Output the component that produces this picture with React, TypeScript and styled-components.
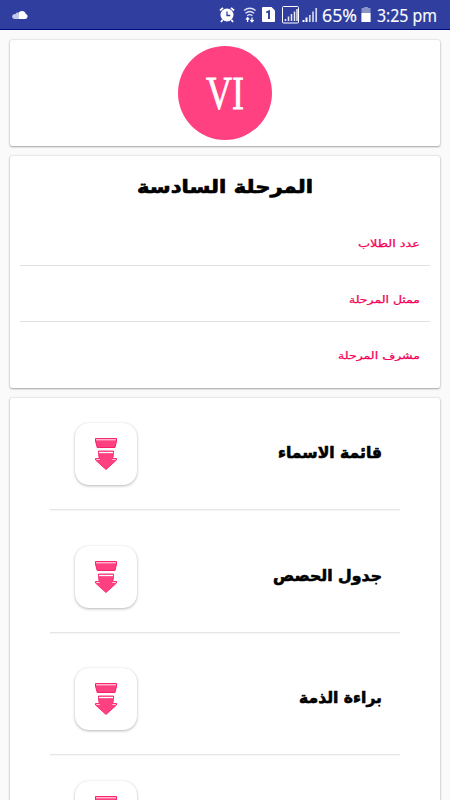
import React from 'react';
import styled, { createGlobalStyle } from 'styled-components';

const GlobalStyle = createGlobalStyle`
  * { box-sizing: border-box; }
  html, body { margin: 0; height: 800px; overflow: hidden; background: #fafafa; }
`;

const Screen = styled.div`
  width: 450px;
  height: 800px;
  overflow: hidden;
  background: #fafafa;
  display: flex;
  flex-direction: column;
`;

const StatusBar = styled.header`
  flex: none;
  height: 30px;
  background: #303f9f;
  border-bottom: 1px solid #000a80;
  display: flex;
  align-items: center;
  justify-content: space-between;
  padding: 0 13px 0 12px;
`;

const StatusGroup = styled.div`
  display: flex;
  align-items: center;
  height: 29px;
`;

const StatusText = styled.svg`
  display: block;
  overflow: visible;
  fill: #fff;
  font-family: 'Open Sans', 'Noto Sans', sans-serif;
  font-size: 18px;
  text { stroke: #fff; stroke-width: 0.2px; }
`;

const Content = styled.main`
  flex: none;
  display: flex;
  flex-direction: column;
  gap: 10px;
  padding: 10px 10px 0;
`;

const Card = styled.section<{ $height: number }>`
  height: ${(p) => p.$height}px;
  background: #fff;
  border-radius: 2px;
  box-shadow: 0 1px 2px rgba(0, 0, 0, 0.3), 0 0 2px rgba(0, 0, 0, 0.22);
`;

const BadgeCard = styled(Card)`
  display: flex;
  justify-content: center;
  padding-top: 6px;
`;

const Badge = styled.div`
  width: 94px;
  height: 94px;
  border-radius: 50%;
  background: #ff4081;
  display: flex;
  align-items: center;
  justify-content: center;
`;

const Numeral = styled.svg`
  display: block;
  overflow: visible;
  fill: #fff;
  stroke: #fff;
  stroke-width: 0.8px;
  font-family: 'Liberation Serif', serif;
  font-size: 46px;
`;

const InfoCard = styled(Card)`
  padding: 0 10px;
`;

const Title = styled.h1`
  margin: 0;
  height: 53px;
  display: flex;
  justify-content: center;
`;

const InfoRow = styled.div`
  height: 56px;
  padding-right: 10px;
  display: flex;
  justify-content: flex-end;
  & + & { border-top: 1px solid #e1e1e1; }
`;

const ListCard = styled(Card)`
  padding: 0 40px;
`;

const ListRow = styled.div<{ $height: number; $top: number }>`
  height: ${(p) => p.$height}px;
  padding: ${(p) => p.$top}px 18px 0 25px;
  display: flex;
  align-items: flex-start;
  justify-content: space-between;
  border-bottom: 1px solid #e6e6e6;
  box-shadow: 0 1px 0 #f6f6f6;
`;

const DownloadButton = styled.button`
  width: 62px;
  height: 62px;
  padding: 0;
  border: 0;
  border-radius: 14px;
  background: #fff;
  box-shadow: 0 1px 3px rgba(0, 0, 0, 0.28), 0 0 1px rgba(0, 0, 0, 0.08);
  display: flex;
  align-items: center;
  justify-content: center;
  flex: none;
`;

const Label = styled.svg<{ $color: string; $size: number; $weight: number; $stroke: number }>`
  display: block;
  overflow: visible;
  flex: none;
  fill: ${(p) => p.$color};
  stroke: ${(p) => p.$color};
  stroke-width: ${(p) => p.$stroke}px;
  stroke-linejoin: round;
  font-family: 'DejaVu Sans', sans-serif;
  font-size: ${(p) => p.$size}px;
  font-weight: ${(p) => p.$weight};
`;

type ArabicProps = {
  text: string;
  width: number;
  baseline: number;
  size: number;
  color?: string;
  weight?: number;
  stroke?: number;
};

function Arabic({ text, width, baseline, size, color = '#000', weight = 700, stroke = 0.6 }: ArabicProps) {
  return (
    <Label $color={color} $size={size} $weight={weight} $stroke={stroke} width={width} height={baseline + 8}>
      <text x={width} y={baseline} direction="rtl" textLength={width} lengthAdjust="spacingAndGlyphs">
        {text}
      </text>
    </Label>
  );
}

function DownloadIcon() {
  return (
    <svg width="24" height="34" viewBox="0 0 24 34">
      <path d="M1.500 1.500h21v2.500l-1.500 6.500H3.200L1.500 4z" fill="#ff4081" stroke="#f8206b" />
      <path d="M2 2.700h20" stroke="#ffb3cb" strokeWidth="1.500" />
      <path d="M4.500 14h15v2.500L18.800 21.500H22.500v1.500L12 32.500 1.500 23v-1.500H5.200L4.500 16.500z" fill="#ff4081" stroke="#f8206b" strokeWidth=".9" />
      <path d="M5 15.500h14" stroke="#fff" strokeWidth="1.300" />
      <path d="M2.200 22.500h3.600M21.800 22.500h-3.600" stroke="#ffc4d7" strokeWidth="1.200" />
    </svg>
  );
}

function StatusIcons() {
  return (
    <svg width="101" height="29" viewBox="219 0 101 29" fill="none">
      <circle cx="227" cy="15" r="6.500" fill="#fff" />
      <path d="M220 10.500l3-2.700M234 10.500l-3-2.700M222.500 20l-1.500 2M231.500 20l1.500 2" stroke="#fff" strokeWidth="1.800" />
      <path d="M227 11.500V15.500h3.300" stroke="#303f9f" strokeWidth="1.300" />
      <path d="M244 10.500q5.800-4.500 11.600 0M245.500 13.200q4.300-3.400 8.600 0M247.200 15.700q2.600-2 5.200 0" stroke="#dfe2f3" strokeWidth="1.300" />
      <path d="M247.600 22v-4M246 19.500l1.600-1.800 1.600 1.800M252 17.500v4M250.400 20l1.600 1.800 1.600-1.800" stroke="#fff" strokeWidth="1.200" />
      <path d="M263 7h8.500l3.500 3.500V21q0 1-1 1H263q-1 0-1-1V8q0-1 1-1z" fill="#fff" />
      <path d="M266.300 12.500l2.700-1.300V19" stroke="#303f9f" strokeWidth="1.900" />
      <rect x="282.500" y="6.500" width="16" height="16.500" rx="1" stroke="#fff" />
      <path d="M285.500 21v-2M288.500 21v-4.500M291.500 21v-7M294.500 21V11.500M297 21V9" stroke="#e8eaf6" strokeWidth="1.500" />
      <path d="M303.500 22v-2M306.500 22v-4.500" stroke="#fff" strokeWidth="2" />
      <path d="M309.800 22v-7M313 22V11.500M316.200 22V8" stroke="#d0d4ec" strokeWidth="1.700" />
    </svg>
  );
}

const details = [
  { text: 'عدد الطلاب', width: 62, baseline: 38 },
  { text: 'ممثل المرحلة', width: 71, baseline: 37 },
  { text: 'مشرف المرحلة', width: 82, baseline: 37 },
];

const downloads = [
  { text: 'قائمة الاسماء', width: 104, height: 112, top: 25 },
  { text: 'جدول الحصص', width: 109, height: 123, top: 36 },
  { text: 'براءة الذمة', width: 83, height: 122, top: 35 },
  { text: '', width: 0, height: 122, top: 26 },
];

export default function App() {
  return (
    <>
      <GlobalStyle />
      <Screen>
        <StatusBar>
          <svg width="16" height="8" viewBox="0 0 16 8">
            <path d="M7 8V1.300Q9-.5 11.500.3 13.500 1 13.800 3 16 3.500 15.500 6 15 8 13 8z" fill="#fff" />
            <path d="M7 1.800C5.500 1 4 1.800 3.500 3 1 2.800-.2 4.500.2 6.300.8 8 3 8 3 8h4z" fill="#c5c9e5" />
          </svg>
          <StatusGroup>
            <StatusIcons />
            <StatusText width="117" height="29">
              <text x="2" y="22" textLength="35" lengthAdjust="spacingAndGlyphs">65%</text>
              <rect x="41.500" y="8" width="9" height="14" fill="#8a93c8" />
              <rect x="44" y="7" width="4" height="1" fill="#8a93c8" />
              <rect x="41.500" y="13" width="9" height="9" />
              <text x="57" y="22" textLength="60" lengthAdjust="spacingAndGlyphs">3:25 pm</text>
            </StatusText>
          </StatusGroup>
        </StatusBar>
        <Content>
          <BadgeCard $height={106}>
            <Badge>
              <Numeral width="40" height="56">
                <text x="1" y="43.500" textLength="38" lengthAdjust="spacingAndGlyphs">VI</text>
              </Numeral>
            </Badge>
          </BadgeCard>
          <InfoCard $height={232}>
            <Title>
              <Arabic text="المرحلة السادسة" width={176} baseline={37} size={18.5} stroke={0.7} />
            </Title>
            {details.map((d) => (
              <InfoRow key={d.text}>
                <Arabic {...d} size={10} color="#f50057" weight={400} stroke={0.25} />
              </InfoRow>
            ))}
          </InfoCard>
          <ListCard $height={520}>
            {downloads.map((d) => (
              <ListRow key={d.text} $height={d.height} $top={d.top}>
                <DownloadButton aria-label={d.text || undefined}>
                  <DownloadIcon />
                </DownloadButton>
                {d.text && <Arabic text={d.text} width={d.width} baseline={35} size={15.5} />}
              </ListRow>
            ))}
          </ListCard>
        </Content>
      </Screen>
    </>
  );
}
